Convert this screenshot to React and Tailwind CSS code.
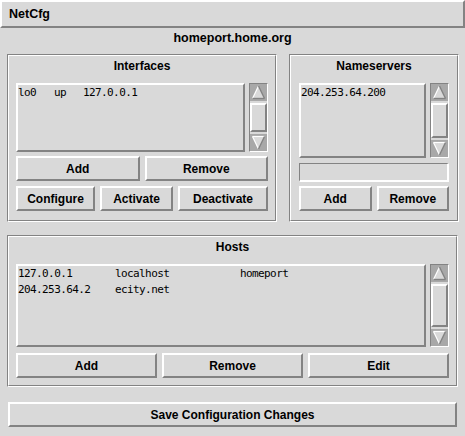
const raised = 'border-2 border-t-white border-l-white border-b-[#838383] border-r-[#838383]';

function Btn({ children, className = '' }) {
  return (
    <div className={`${raised} flex items-center justify-center font-bold text-[12px] text-black ${className}`}>
      {children}
    </div>
  );
}

function Frame({ title, className = '', children }) {
  return (
    <div className={`border border-t-[#838383] border-l-[#838383] border-b-white border-r-white ${className}`}>
      <div className="h-full flex flex-col border border-t-white border-l-white border-b-[#838383] border-r-[#838383] px-[7px]">
        <div className="h-[27px] pt-[2px] leading-[16px] text-center font-bold text-[12px]">{title}</div>
        {children}
      </div>
    </div>
  );
}

function Arrow({ down }) {
  return (
    <svg width="17" height="17" viewBox="0 0 17 17" className="block shrink-0">
      <rect x="0" y="0" width="17" height="17" fill="#a8a8a8" />
      {down ? (
        <>
          <polygon points="2.5,2.5 14.5,2.5 8.5,15" fill="#d9d9d9" />
          <line x1="2.5" y1="2.5" x2="14.5" y2="2.5" stroke="#ffffff" strokeWidth="1.2" />
          <line x1="2.5" y1="2.5" x2="8.5" y2="15" stroke="#ffffff" strokeWidth="1.2" />
          <line x1="14.5" y1="2.5" x2="8.5" y2="15" stroke="#838383" strokeWidth="1.4" />
        </>
      ) : (
        <>
          <polygon points="8.5,2 2.5,14.5 14.5,14.5" fill="#d9d9d9" />
          <line x1="8.5" y1="2" x2="2.5" y2="14.5" stroke="#ffffff" strokeWidth="1.2" />
          <line x1="8.5" y1="2" x2="14.5" y2="14.5" stroke="#838383" strokeWidth="1.4" />
          <line x1="2.5" y1="14.5" x2="14.5" y2="14.5" stroke="#838383" strokeWidth="1.4" />
        </>
      )}
    </svg>
  );
}

function ScrollBar() {
  return (
    <div className="w-[19px] h-full flex flex-col border border-t-[#838383] border-l-[#838383] border-b-white border-r-white bg-[#d9d9d9]">
      <Arrow />
      <div className={`flex-1 my-[2px] ${raised}`} />
      <Arrow down />
    </div>
  );
}

function ListBox({ children, className = '' }) {
  return (
    <div className={`${raised} font-['DejaVu_Sans_Mono',monospace] text-[11px] tracking-[-0.6px] leading-[16px] text-black ${className}`}>
      {children}
    </div>
  );
}

export default function App() {
  return (
    <div className="w-[465px] h-[436px] bg-[#d9d9d9] font-['Liberation_Sans',Arial,sans-serif] text-black overflow-hidden">
      <div className={`h-[28px] ${raised} flex items-center pl-[7px] font-bold text-[12.5px]`}>NetCfg</div>
      <div className="h-[26px] pt-[2px] leading-[16px] text-center font-bold text-[12.5px]">homeport.home.org</div>

      <div className="flex pl-[7px] h-[168px]">
        <Frame title="Interfaces" className="w-[270px]">
          <div className="flex h-[69px] gap-[4px]">
            <ListBox className="flex-1">
              <div className="flex">
                <span className="w-[36px]">lo0</span>
                <span className="w-[29px]">up</span>
                <span>127.0.0.1</span>
              </div>
            </ListBox>
            <ScrollBar />
          </div>
          <div className="flex gap-[5px] mt-[4px] h-[25px]">
            <Btn className="flex-1">Add</Btn>
            <Btn className="flex-1">Remove</Btn>
          </div>
          <div className="flex gap-[5px] mt-[5px] h-[25px]">
            <Btn className="w-[79px]">Configure</Btn>
            <Btn className="w-[73px]">Activate</Btn>
            <Btn className="flex-1">Deactivate</Btn>
          </div>
        </Frame>

        <Frame title="Nameservers" className="w-[170px] ml-[12px]">
          <div className="flex h-[75px] gap-[4px] px-[1px]">
            <ListBox className="flex-1">
              <div>204.253.64.200</div>
            </ListBox>
            <ScrollBar />
          </div>
          <div className="mt-[5px] h-[19px] mx-[1px] border border-t-[#838383] border-l-[#838383] border-b-2 border-r-2 border-b-white border-r-white" />
          <div className="flex gap-[5px] mt-[4px] h-[25px] px-[1px]">
            <Btn className="flex-1">Add</Btn>
            <Btn className="flex-1">Remove</Btn>
          </div>
        </Frame>
      </div>

      <Frame title="Hosts" className="mt-[13px] ml-[7px] w-[451px] h-[152px]">
        <div className="flex h-[83px] gap-[4px]">
          <ListBox className="flex-1">
            <div className="flex">
              <span className="w-[97px]">127.0.0.1</span>
              <span className="w-[125px]">localhost</span>
              <span>homeport</span>
            </div>
            <div className="flex">
              <span className="w-[97px]">204.253.64.2</span>
              <span>ecity.net</span>
            </div>
          </ListBox>
          <ScrollBar />
        </div>
        <div className="flex gap-[5px] mt-[6px] h-[25px]">
          <Btn className="flex-1">Add</Btn>
          <Btn className="flex-1">Remove</Btn>
          <Btn className="flex-1">Edit</Btn>
        </div>
      </Frame>

      <Btn className="mt-[15px] ml-[8px] w-[449px] h-[25px]">Save Configuration Changes</Btn>
    </div>
  );
}
